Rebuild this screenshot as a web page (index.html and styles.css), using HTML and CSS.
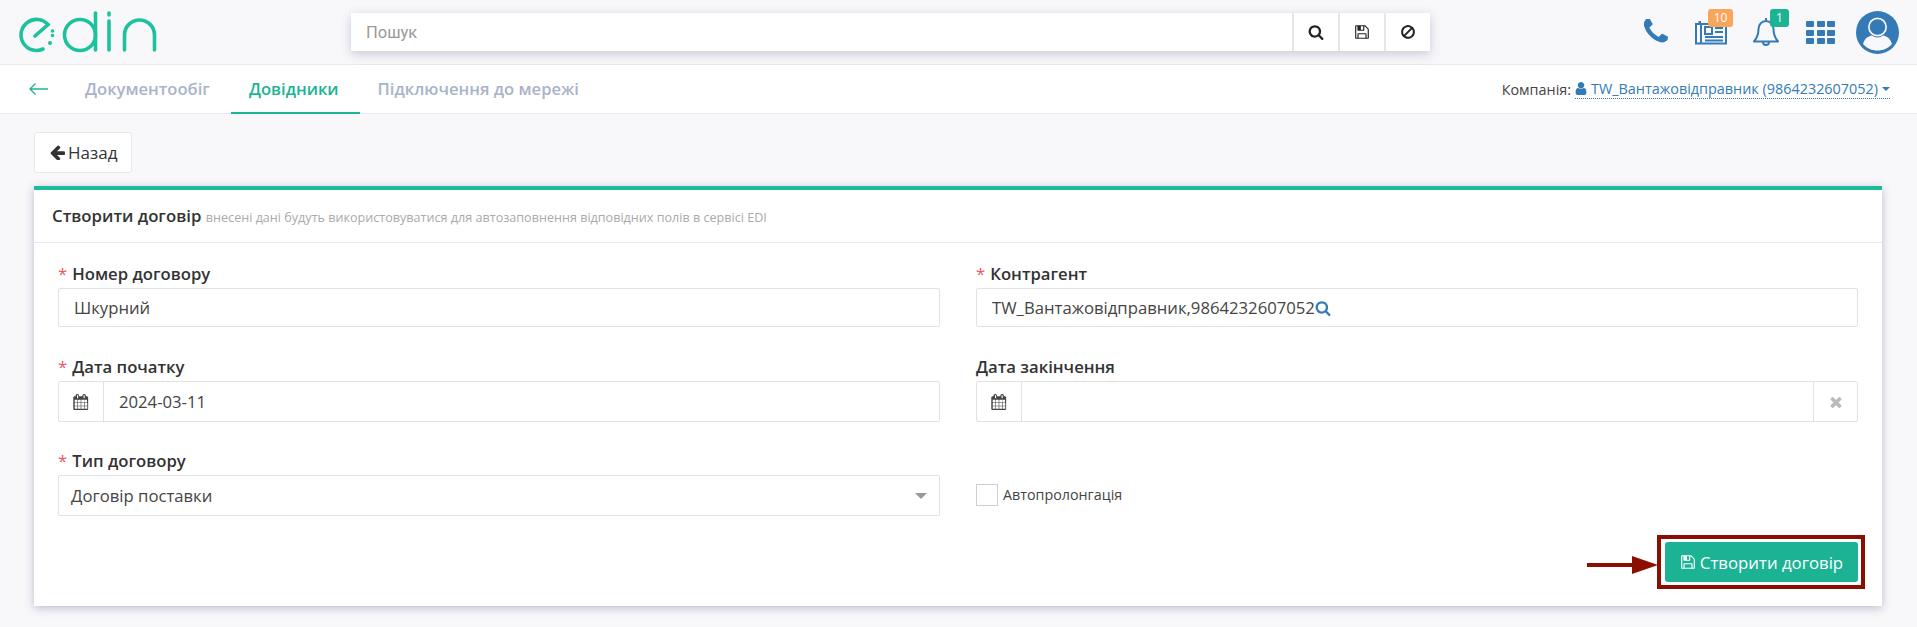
FILE: index.html
```html
<!DOCTYPE html>
<html lang="uk">

<head>
  <meta charset="UTF-8">
  <meta name="viewport" content="width=device-width, initial-scale=1.0">
  <title>EDIN - Створити договір</title>
  <link rel="stylesheet" href="styles.css">
</head>

<body>
  <svg class="sprite" xmlns="http://www.w3.org/2000/svg">
    <symbol id="i-search" viewBox="0 0 1792 1792"><path d="M1216 832q0-185-131.500-316.500t-316.500-131.500-316.500 131.500-131.500 316.500 131.500 316.500 316.500 131.500 316.500-131.500 131.500-316.500zm512 832q0 52-38 90t-90 38q-54 0-90-38l-343-342q-179 124-399 124-143 0-273.500-55.500t-225-150-150-225-55.500-273.500 55.500-273.500 150-225 225-150 273.500-55.500 273.500 55.500 225 150 150 225 55.500 273.500q0 220-124 399l343 343q37 37 37 90z"/></symbol>
    <symbol id="i-save" viewBox="0 0 1792 1792"><path d="M512 1536h768v-384h-768v384zm896 0h128v-896q0-14-10-38.500t-20-34.500l-281-281q-10-10-34-20t-39-10v416q0 40-28 68t-68 28h-576q-40 0-68-28t-28-68v-416h-128v1280h128v-416q0-40 28-68t68-28h832q40 0 68 28t28 68v416zm-384-928v-320q0-13-9.500-22.500t-22.500-9.500h-192q-13 0-22.500 9.500t-9.500 22.500v320q0 13 9.500 22.500t22.500 9.500h192q13 0 22.500-9.500t9.500-22.500zm640 32v928q0 40-28 68t-68 28h-1344q-40 0-68-28t-28-68v-1344q0-40 28-68t68-28h928q40 0 88 20t76 48l280 280q28 28 48 76t20 88z"/></symbol>
    <symbol id="i-ban" viewBox="0 0 1792 1792"><path d="M1440 893q0-161-87-295l-754 753q137 89 297 89 111 0 211.500-43.500t173.500-116.500 116-174.500 43-212.500zm-999 299l755-754q-135-91-300-91-148 0-273 73t-198 199-73 274q0 162 89 299zm1223-299q0 157-61 300t-163.500 246-245 164-298.500 61-298.500-61-245-164-163.500-246-61-300 61-299.500 163.500-245.500 245-164 298.500-61 298.500 61 245 164 163.500 245.500 61 299.500z"/></symbol>
    <symbol id="i-calendar" viewBox="0 0 1792 1792"><path d="M192 1664h288v-288h-288v288zm352 0h320v-288h-320v288zm-352-352h288v-320h-288v320zm352 0h320v-320h-320v320zm-352-384h288v-288h-288v288zm736 736h320v-288h-320v288zm-384-736h320v-288h-320v288zm768 736h288v-288h-288v288zm-384-352h320v-320h-320v320zm-352-864v-288q0-13-9.500-22.500t-22.500-9.500h-64q-13 0-22.500 9.500t-9.500 22.500v288q0 13 9.500 22.500t22.500 9.500h64q13 0 22.500-9.500t9.500-22.500zm736 864h288v-320h-288v320zm-384-384h320v-288h-320v288zm352 0h288v-288h-288v288zm32-480v-288q0-13-9.500-22.500t-22.500-9.500h-64q-13 0-22.500 9.500t-9.500 22.500v288q0 13 9.500 22.500t22.500 9.500h64q13 0 22.500-9.500t9.500-22.500zm384-64v1280q0 52-38 90t-90 38h-1408q-52 0-90-38t-38-90v-1280q0-52 38-90t90-38h128v-96q0-66 47-113t113-47h64q66 0 113 47t47 113v96h384v-96q0-66 47-113t113-47h64q66 0 113 47t47 113v96h128q52 0 90 38t38 90z"/></symbol>
  </svg>

  <header class="topbar">
    <a class="logo" href="#">
      <svg width="140" height="46" viewBox="0 0 140 46" fill="none" stroke="#1cc29b" stroke-width="3.600" stroke-linecap="round">
        <path d="M17 27 L30 15.500 A15.500 15.500 0 1 0 25 40" />
        <circle cx="34.500" cy="22" r="1.800" fill="#1cc29b" stroke="none" />
        <circle cx="34.500" cy="26.500" r="1.800" fill="#1cc29b" stroke="none" />
        <circle cx="32" cy="34" r="2" fill="#1cc29b" stroke="none" />
        <circle cx="62" cy="26" r="15.500" />
        <path d="M77.500 4 V41" />
        <path d="M91 4 V6 M91 12 V41" />
        <path d="M106.500 41 V26 A15 15 0 0 1 136.500 26 V41" />
      </svg>
    </a>

    <div class="search">
      <input class="search-input" type="text" placeholder="Пошук">
      <button class="search-btn"><svg class="ico-16"><use href="#i-search" /></svg></button>
      <button class="search-btn"><svg class="ico-16"><use href="#i-save" /></svg></button>
      <button class="search-btn"><svg class="ico-16"><use href="#i-ban" /></svg></button>
    </div>

    <div class="tools">
      <svg class="tool-phone" width="24" height="24" viewBox="200 170 1400 1400" fill="#337ab7"><path d="M1600 1240q0 27-10 70.500t-21 68.500q-21 50-122 106-94 51-186 51-27 0-53-3.500t-57.500-12.500-47-14.500-55.500-20.500-49-18q-98-35-175-83-127-79-264-216t-216-264q-48-77-83-175-3-9-18-49t-20.500-55.500-14.500-47-12.500-57.500-3.500-53q0-92 51-186 56-101 106-122 25-11 68.500-21t70.500-10q14 0 21 3 18 6 53 76 11 19 30 54t35 63.500 31 53.500q3 4 17.500 25t21.500 35.500 7 28.500q0 20-28.500 50t-62 55-62 53-28.500 46q0 9 5 22.500t8.500 20.500 14 24 11.500 19q76 137 174 235t235 174q2 1 19 11.500t24 14 20.500 8.500 22.500 5q18 0 46-28.500t53-62 55-62 50-28.500q14 0 28.500 7t35.500 21.500 25 17.500q25 15 53.500 31t63.500 35 54 30q70 35 76 53 3 7 3 21z" /></svg>

      <div class="tool tool-news">
        <svg width="34" height="24" viewBox="0 0 34 24" fill="none" stroke="#337ab7" stroke-width="2">
          <path d="M7 3 H2 V22.500 H32 V3 H7 V22.500" />
          <path d="M4.500 1 H7" />
          <rect x="11" y="6" width="7" height="7" />
          <path d="M21 7 H29 M21 11 H29 M11 16 H29 M11 19.500 H29" />
        </svg>
        <span class="badge badge-orange">10</span>
      </div>

      <div class="tool tool-bell">
        <svg width="28" height="30" viewBox="0 0 28 30" fill="none" stroke="#337ab7" stroke-width="2" stroke-linejoin="round">
          <path d="M2 24.500 C6 20 6.500 16 6.500 12 C6.500 7.500 10 4 14 4 C18 4 21.500 7.500 21.500 12 C21.500 16 22 20 26 24.500 Z" />
          <path d="M14 1 V4" />
          <path d="M11 25 A3 3 0 0 0 17 25" />
        </svg>
        <span class="badge badge-green">1</span>
      </div>

      <div class="apps">
        <i></i><i></i><i></i><i></i><i></i><i></i><i></i><i></i><i></i>
      </div>

      <svg class="avatar" width="43" height="43" viewBox="0 0 43 43">
        <circle cx="21.500" cy="21.500" r="21.500" fill="#337ab7" />
        <circle cx="21.500" cy="16" r="9.500" fill="#f8f8fb" />
        <circle cx="21.500" cy="16" r="7.800" fill="#337ab7" />
        <path d="M7 33 C9 26.500 13 25 16 24.500 C19 27 24 27 27 24.500 C30 25 34 26.500 36 33 C32 37.500 27 39.500 21.500 39.500 C16 39.500 11 37.500 7 33 Z" fill="#f8f8fb" />
      </svg>
    </div>
  </header>

  <nav class="navbar">
    <a class="nav-back" href="#">
      <svg width="19" height="12" viewBox="0 0 19 12" fill="none" stroke="#1cb394" stroke-width="1.300"><path d="M19 6 H1 M6.500 .5 L1 6 L6.500 11.500" /></svg>
    </a>
    <a class="nav-tab" href="#">Документообіг</a>
    <a class="nav-tab active" href="#">Довідники</a>
    <a class="nav-tab" href="#">Підключення до мережі</a>

    <div class="company">
      Компанія:
      <a class="company-link" href="#">
        <svg width="12" height="13" viewBox="256 128 1280 1536" fill="#337ab7"><path d="M1536 1399q0 109-62.500 187t-150.500 78h-854q-88 0-150.500-78t-62.500-187q0-85 8.500-160.500t31.500-152 58.500-131 94-89 134.500-34.500q131 128 313 128t313-128q76 0 134.500 34.500t94 89 58.500 131 31.500 152 8.500 160.500zm-256-887q0 159-112.500 271.500t-271.500 112.500-271.500-112.500-112.500-271.500 112.500-271.500 271.500-112.500 271.500 112.500 112.500 271.500z" /></svg>
        TW_Вантажовідправник (9864232607052)
        <span class="caret"></span>
      </a>
    </div>
  </nav>

  <main class="content">
    <a class="back-btn" href="#">
      <svg width="15" height="15" viewBox="128 128 1536 1536" fill="#333"><path d="M1664 896v128q0 53-32.500 90.500t-84.500 37.500h-704l293 294q38 36 38 90t-38 90l-75 76q-37 37-90 37-52 0-91-37l-651-652q-37-37-37-90 0-52 37-91l651-650q38-38 91-38 52 0 90 38l75 74q38 38 38 91t-38 91l-293 293h704q52 0 84.500 37.500t32.500 90.500z" /></svg>
      Назад
    </a>

    <section class="card">
      <div class="card-head">
        <b>Створити договір</b>
        <small>внесені дані будуть використовуватися для автозаповнення відповідних полів в сервісі EDI</small>
      </div>

      <form class="card-form">
        <div class="field">
          <label class="req">Номер договору</label>
          <input class="control control-sm" type="text" value="Шкурний">
        </div>
        <div class="field">
          <label class="req">Контрагент</label>
          <div class="control control-sm">TW_Вантажовідправник,9864232607052<svg class="ico-16 blue"><use href="#i-search" /></svg></div>
        </div>

        <div class="field">
          <label class="req">Дата початку</label>
          <div class="control group">
            <span class="addon"><svg class="ico-16 dark"><use href="#i-calendar" /></svg></span>
            <input class="group-input" type="text" value="2024-03-11">
          </div>
        </div>
        <div class="field">
          <label>Дата закінчення</label>
          <div class="control group">
            <span class="addon"><svg class="ico-16 dark"><use href="#i-calendar" /></svg></span>
            <input class="group-input" type="text">
            <span class="addon addon-clear">
              <svg width="12" height="12" viewBox="250 250 1290 1290" fill="#bbb"><path d="M1490 1322q0 40-28 68l-136 136q-28 28-68 28t-68-28l-294-294-294 294q-28 28-68 28t-68-28l-136-136q-28-28-28-68t28-68l294-294-294-294q-28-28-28-68t28-68l136-136q28-28 68-28t68 28l294 294 294-294q28-28 68-28t68 28l136 136q28 28 28 68t-28 68l-294 294 294 294q28 28 28 68z" /></svg>
            </span>
          </div>
        </div>

        <div class="field">
          <label class="req">Тип договору</label>
          <div class="control control-select">Договір поставки<span class="select-arrow"></span></div>
        </div>
        <div class="field field-check">
          <input class="check" type="checkbox" id="auto_prolong">
          <label class="check-label" for="auto_prolong">Автопролонгація</label>
        </div>

        <div class="form-actions">
          <button class="submit" type="button"><svg class="ico-16"><use href="#i-save" /></svg>Створити договір</button>
          <!-- червона рамка і стрілка поверх кнопки -->
          <span class="mark-box"></span>
          <svg class="mark-arrow" width="71" height="18" viewBox="0 0 71 18" fill="#8b0f00"><path d="M0 7 H45 V0 L71 9 L45 18 V11 H0 Z" /></svg>
        </div>
      </form>
    </section>
  </main>
</body>

</html>
```

FILE: styles.css
```css
* {
  box-sizing: border-box;
}

body {
  margin: 0;
  background-color: #f8f8fb;
  color: #333;
  font-family: "Open Sans", sans-serif;
  font-size: 14px;
}

a {
  text-decoration: none;
}

.sprite {
  display: none;
}

.ico-16 {
  width: 16px;
  height: 16px;
  fill: currentColor;
}

.blue {
  color: #337ab7;
}

.dark {
  color: #444;
}

/* header */
.topbar {
  display: flex;
  height: 65px;
  padding: 13px 18px 0 18px;
  border-bottom: 1px solid #e7e9ef;
}

.logo {
  display: block;
  width: 333px;
  height: 46px;
  margin-top: -4px;
}

.search {
  display: flex;
  width: 1079px;
  height: 38px;
  background-color: #fff;
  box-shadow: 0 3px 10px rgba(60, 60, 110, 0.25);
}

.search-input {
  flex: 1;
  min-width: 0;
  padding: 0 15px;
  border: none;
  outline: none;
  font-family: Roboto, sans-serif;
  font-size: 16.500px;
  color: #333;
}

.search-input::placeholder {
  color: #999;
}

.search-btn {
  display: flex;
  align-items: center;
  justify-content: center;
  width: 46px;
  padding: 0;
  border: none;
  border-left: 2px solid #e6e6e6;
  background: #fff;
  color: #222;
}

.tools {
  position: relative;
  display: flex;
  align-items: flex-start;
  margin-left: 214px;
}

.tool-phone {
  margin-top: 6px;
}

.tool {
  position: relative;
}

.tool-news {
  margin: 8px 0 0 26px;
  height: 24px;
}

.tool-bell {
  margin: 4px 0 0 24px;
  height: 30px;
}

.badge {
  position: absolute;
  height: 18px;
  border-radius: 3px;
  color: #fff;
  font-size: 12px;
  line-height: 18px;
  text-align: center;
}

.tool-news .badge {
  top: -12px;
  left: 14px;
  width: 25px;
}

.tool-bell .badge {
  top: -8px;
  left: 18px;
  width: 19px;
}

.badge-orange {
  background-color: #f9a65a;
}

.badge-green {
  background-color: #1cb394;
}

.apps {
  display: grid;
  grid-template-columns: repeat(3, 8px);
  grid-template-rows: repeat(3, 6px);
  gap: 2.500px;
  margin: 8px 0 0 26px;
}

.apps i {
  display: block;
  border-radius: 1px;
  background-color: #337ab7;
}

.avatar {
  margin: -2px 0 0 21px;
}

/* nav */
.navbar {
  display: flex;
  align-items: stretch;
  height: 49px;
  padding-left: 29px;
  background-color: #fff;
  border-bottom: 1px solid #e7e9ef;
}

.nav-back {
  display: flex;
  align-items: center;
  width: 38px;
}

.nav-tab {
  display: flex;
  align-items: center;
  padding: 0 21px 0 18px;
  border-bottom: 2px solid transparent;
  margin-bottom: -1px;
  color: #a9b3c9;
  font-size: 16.600px;
  font-weight: 600;
}

.nav-tab.active {
  color: #1cb394;
  border-bottom-color: #1cb394;
}

.company {
  display: flex;
  align-items: center;
  gap: 4px;
  margin-left: auto;
  padding-right: 27px;
  font-size: 14.400px;
  color: #444;
}

.company-link {
  display: flex;
  align-items: center;
  gap: 4px;
  border-bottom: 1px dotted #337ab7;
  color: #337ab7;
}

.caret {
  width: 0;
  height: 0;
  border-left: 4px solid transparent;
  border-right: 4px solid transparent;
  border-top: 4px solid #337ab7;
}

/* content */
.content {
  padding: 18px 35px 21px 34px;
}

.back-btn {
  display: inline-flex;
  align-items: center;
  gap: 3px;
  width: 98px;
  height: 41px;
  padding-left: 15px;
  background-color: #fff;
  border: 1px solid #e7e7e7;
  border-radius: 3px;
  color: #333;
  font-size: 17px;
}

.card {
  margin-top: 13px;
  background-color: #fff;
  border-top: 4px solid #1abc9c;
  box-shadow: 0 2px 9px rgba(60, 60, 110, 0.32);
}

.card-head {
  height: 53px;
  padding: 0 18px;
  line-height: 51px;
  border-bottom: 1px solid #e7eaec;
  font-size: 16.800px;
}

.card-head b {
  font-weight: 600;
}

.card-head small {
  color: #aaa;
  font-size: 12.600px;
}

.card-form {
  display: grid;
  grid-template-columns: 1fr 1fr;
  column-gap: 36px;
  row-gap: 28px;
  padding: 20px 24px 24px 24px;
}

.field {
  display: flex;
  flex-direction: column;
}

.field label {
  height: 25px;
  font-size: 16.700px;
  font-weight: 600;
  line-height: 22px;
  color: #333;
}

.req::before {
  content: "*";
  margin-right: 5px;
  color: #ed5565;
  font-weight: 400;
}

.control {
  display: flex;
  align-items: center;
  width: 100%;
  height: 41px;
  padding: 0 15px;
  background-color: #fff;
  border: 1px solid #e2e2e2;
  border-radius: 2px;
  outline: none;
  color: #444;
  font-family: "Open Sans", sans-serif;
  font-size: 16.700px;
}

.control-sm {
  height: 39px;
  margin-bottom: 1px;
}

.control-select {
  position: relative;
  padding-left: 12px;
}

.select-arrow {
  position: absolute;
  right: 12px;
  top: 17px;
  width: 0;
  height: 0;
  border-left: 6px solid transparent;
  border-right: 6px solid transparent;
  border-top: 6px solid #999;
}

.group {
  padding: 0;
}

.addon {
  display: flex;
  flex: none;
  align-items: center;
  justify-content: center;
  width: 45px;
  height: 100%;
  border-right: 1px solid #e2e2e2;
}

.addon-clear {
  width: 44px;
  border-right: none;
  border-left: 1px solid #e2e2e2;
}

.group-input {
  flex: 1;
  min-width: 0;
  height: 100%;
  padding: 0 15px;
  border: none;
  outline: none;
  color: #444;
  font-family: "Open Sans", sans-serif;
  font-size: 16.700px;
}

.field-check {
  flex-direction: row;
  align-items: center;
  gap: 5px;
  padding-top: 24px;
}

.check {
  width: 22px;
  height: 22px;
  margin: 0;
  appearance: none;
  border: 1px solid #cfcfcf;
  background-color: #fff;
}

.field .check-label {
  height: auto;
  font-size: 14.300px;
  font-weight: 400;
  color: #444;
}

.form-actions {
  position: relative;
  grid-column: 1 / 3;
  display: flex;
  justify-content: flex-end;
  margin-top: -2px;
}

.submit {
  display: flex;
  align-items: center;
  justify-content: center;
  gap: 4px;
  width: 193px;
  height: 40px;
  padding: 0;
  border: none;
  border-radius: 3px;
  background-color: #1cb394;
  color: #fff;
  font-family: "Open Sans", sans-serif;
  font-size: 16.800px;
}

.mark-box {
  position: absolute;
  top: -7px;
  right: -7px;
  width: 208px;
  height: 54px;
  border: 4px solid #8b0f00;
}

.mark-arrow {
  position: absolute;
  top: 14px;
  right: 200px;
}
```
